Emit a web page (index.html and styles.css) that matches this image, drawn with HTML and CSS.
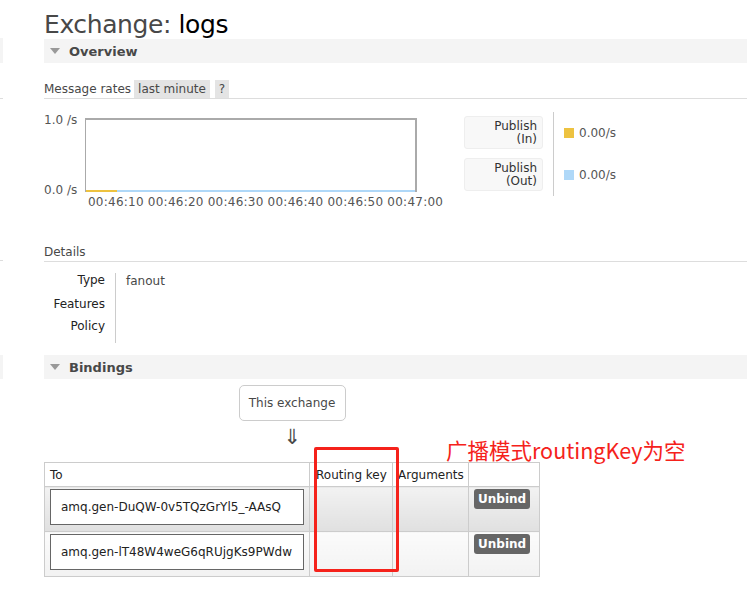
FILE: index.html
```html
<!DOCTYPE html>
<html>
<head>
<meta charset="utf-8">
<link rel="stylesheet" href="styles.css">
</head>
<body>
<div class="edge">
  <div class="edge-block e1"></div>
  <div class="edge-line e2"></div>
  <div class="edge-line e3"></div>
  <div class="edge-block e4"></div>
</div>
<div class="main">
  <h1 class="title">Exchange: <span class="name">logs</span></h1>

  <div class="section-head"><span class="tri"></span>Overview</div>

  <div class="rates-bar">
    <span class="rates-label">Message rates</span>
    <span class="pill">last minute</span>
    <span class="pill q">?</span>
  </div>

  <div class="overview">
    <div class="chart-wrap">
      <div class="ylabels">
        <span>1.0 /s</span>
        <span>0.0 /s</span>
      </div>
      <div class="chart">
        <div class="baseline"><span class="seg-in"></span><span class="seg-out"></span></div>
      </div>
      <div class="xlabels">00:46:10 00:46:20 00:46:30 00:46:40 00:46:50 00:47:00</div>
    </div>
    <div class="legend">
      <div class="legend-names">
        <div class="lbox">Publish<br>(In)</div>
        <div class="lbox">Publish<br>(Out)</div>
      </div>
      <div class="legend-vals">
        <div class="lval"><span class="sw sw-in"></span>0.00/s</div>
        <div class="lval"><span class="sw sw-out"></span>0.00/s</div>
      </div>
    </div>
  </div>

  <div class="details-head">Details</div>
  <div class="details">
    <div class="dkeys">
      <div class="k1">Type</div>
      <div class="k2">Features</div>
      <div class="k3">Policy</div>
    </div>
    <div class="dvals">
      <div>fanout</div>
    </div>
  </div>

  <div class="section-head bind-head"><span class="tri"></span>Bindings</div>

  <div class="flow">
    <div class="this-ex">This exchange</div>
    <div class="arrow">&#8659;</div>
  </div>

  <div class="table-area">
    <table class="bindings">
      <colgroup>
        <col class="w-to"><col class="w-rk"><col class="w-arg"><col class="w-act">
      </colgroup>
      <thead>
        <tr><th>To</th><th class="c-rk">Routing key</th><th class="c-arg">Arguments</th><th></th></tr>
      </thead>
      <tbody>
        <tr class="r1">
          <td><div class="qbox">amq.gen-DuQW-0v5TQzGrYl5_-AAsQ</div></td>
          <td></td><td></td>
          <td><span class="btn">Unbind</span></td>
        </tr>
        <tr class="r2">
          <td><div class="qbox">amq.gen-lT48W4weG6qRUjgKs9PWdw</div></td>
          <td></td><td></td>
          <td><span class="btn">Unbind</span></td>
        </tr>
      </tbody>
    </table>
    <div class="annot">广播模式routingKey为空</div>
    <div class="redbox"></div>
  </div>
</div>
</body>
</html>
```

FILE: styles.css
```css
html, body {
  margin: 0;
  padding: 0;
  background: #fff;
}
body {
  font-family: "DejaVu Sans", Verdana, sans-serif;
  font-size: 12px;
  color: #484848;
  position: relative;
  width: 747px;
  height: 600px;
  overflow: hidden;
}
.edge {
  position: absolute;
  left: 0;
  top: 0;
  width: 4px;
}
.edge-block {
  position: absolute;
  left: 0;
  width: 3px;
  background: #f4f4f4;
}
.edge-line {
  position: absolute;
  left: 0;
  width: 3px;
  height: 1px;
  background: #ddd;
}
.e1 { top: 38px; height: 25px; }
.e2 { top: 98px; }
.e3 { top: 260px; }
.e4 { top: 355px; height: 24px; }

.main {
  margin-left: 44px;
}
.title {
  margin: 0;
  padding-top: 11px;
  height: 28px;
  font-size: 25px;
  font-weight: normal;
  line-height: 28px;
  color: #484848;
  white-space: nowrap;
  letter-spacing: -0.4px;
}
.title .name {
  color: #000;
}
.section-head {
  height: 24px;
  background: #f4f4f4;
  display: flex;
  align-items: center;
  font-weight: bold;
  font-size: 13px;
  color: #484848;
}
.tri {
  display: inline-block;
  width: 0;
  height: 0;
  border-left: 5px solid transparent;
  border-right: 5px solid transparent;
  border-top: 6px solid #999;
  margin-left: 6px;
  margin-right: 9px;
}
.rates-bar {
  margin-top: 17px;
  display: flex;
  align-items: stretch;
  height: 18px;
  border-bottom: 1px solid #ddd;
  line-height: 18px;
  color: #484848;
}
.rates-label {
  margin-right: 3px;
}
.pill {
  background: #e4e4e4;
  padding: 0 4px;
  margin-right: 5px;
  color: #484848;
}
.overview {
  display: flex;
  margin-top: 19px;
  height: 113px;
}
.chart-wrap {
  display: grid;
  grid-template-columns: 41px 332px;
  grid-template-rows: 74px auto;
  width: 420px;
}
.ylabels {
  display: flex;
  flex-direction: column;
  justify-content: space-between;
  color: #555;
  line-height: 14px;
  margin-top: -5px;
  margin-bottom: -5px;
}
.chart {
  border: 2px solid #aaa;
  border-left-width: 1px;
  border-bottom: none;
  position: relative;
  box-sizing: border-box;
  height: 74px;
}
.baseline {
  position: absolute;
  left: 0;
  right: 0;
  bottom: 0;
  height: 2px;
  display: flex;
}
.seg-in {
  width: 31px;
  background: #edc240;
}
.seg-out {
  flex: 1;
  background: #afd8f8;
}
.xlabels {
  grid-column: 2;
  color: #555;
  white-space: nowrap;
  margin-left: 3px;
  margin-top: 3px;
  line-height: 14px;
  letter-spacing: 0.24px;
}
.legend {
  display: flex;
  margin-top: -6px;
  height: 84px;
}
.legend-names {
  display: flex;
  flex-direction: column;
  gap: 9px;
  padding-top: 4px;
}
.lbox {
  width: 79px;
  height: 33px;
  box-sizing: border-box;
  background: #f8f8f8;
  border: 1px solid #eee;
  border-radius: 3px;
  text-align: right;
  padding: 3px 5px 0 0;
  line-height: 13px;
  color: #333;
}
.legend-vals {
  margin-left: 10px;
  border-left: 1px solid #ccc;
  padding-left: 10px;
  display: flex;
  flex-direction: column;
  gap: 26px;
  padding-top: 13px;
}
.lval {
  display: flex;
  align-items: center;
  color: #555;
  height: 16px;
}
.sw {
  width: 10px;
  height: 10px;
  margin-right: 5px;
}
.sw-in { background: #edc240; }
.sw-out { background: #afd8f8; }

.details-head {
  margin-top: 13px;
  height: 17px;
  border-bottom: 1px solid #ddd;
  line-height: 16px;
  color: #484848;
}
.details {
  display: flex;
  margin-top: 11px;
  height: 70px;
}
.dkeys {
  width: 61px;
  text-align: right;
  padding-right: 10px;
  border-right: 1px solid #ccc;
  color: #222;
  line-height: 14px;
}
.dkeys .k2 { margin-top: 10px; }
.dkeys .k3 { margin-top: 8px; }
.dvals {
  padding-left: 10px;
  padding-top: 1px;
  line-height: 14px;
  color: #484848;
}
.bind-head {
  margin-top: 12px;
}
.flow {
  width: 496px;
  display: flex;
  flex-direction: column;
  align-items: center;
  margin-top: 6px;
}
.this-ex {
  border: 1px solid #ccc;
  border-radius: 5px;
  width: 107px;
  height: 36px;
  box-sizing: border-box;
  display: flex;
  align-items: center;
  justify-content: center;
  color: #484848;
}
.arrow {
  font-size: 21px;
  line-height: 24px;
  margin-top: 4px;
  color: #484848;
}
.table-area {
  position: relative;
  margin-top: 13px;
}
.bindings {
  border-collapse: collapse;
  border: 1px solid #ccc;
  color: #222;
  table-layout: fixed;
  width: 495px;
}
.w-to { width: 265px; }
.w-rk { width: 83px; }
.w-arg { width: 76px; }
.w-act { width: 71px; }
.bindings th {
  font-weight: normal;
  text-align: left;
  height: 23px;
  padding: 0 5px;
  border: 1px solid #ccc;
  color: #222;
  white-space: nowrap;
  overflow: hidden;
}
.bindings th.c-rk {
  padding: 0 0 0 6px;
}
.bindings th.c-arg {
  padding: 0 0 0 5px;
}
.bindings td {
  border: 1px solid #ccc;
  padding: 0;
  height: 44px;
  vertical-align: top;
}
.r1 td {
  background: linear-gradient(#f2f2f2, #e0e0e0);
}
.r2 td {
  background: linear-gradient(#fbfbfb, #f2f2f2);
}
.qbox {
  margin: 2px 5px;
  height: 36px;
  box-sizing: border-box;
  border: 1px solid #666;
  background: #fff;
  display: flex;
  align-items: center;
  padding-left: 10px;
  color: #222;
  white-space: nowrap;
}
.btn {
  display: inline-block;
  margin: 2px 0 0 5px;
  background: #666;
  color: #fff;
  font-weight: bold;
  border-radius: 3px;
  padding: 0 4px;
  height: 20px;
  line-height: 20px;
}
.annot {
  position: absolute;
  left: 402px;
  top: -25px;
  color: #f5221b;
  font-family: "Noto Sans CJK SC", "Noto Sans", sans-serif;
  font-size: 21.5px;
  line-height: 26px;
  white-space: nowrap;
}
.redbox {
  position: absolute;
  left: 270px;
  top: -15px;
  width: 85px;
  height: 125px;
  box-sizing: border-box;
  border: 3px solid #f5221b;
  border-radius: 2px;
}
```
